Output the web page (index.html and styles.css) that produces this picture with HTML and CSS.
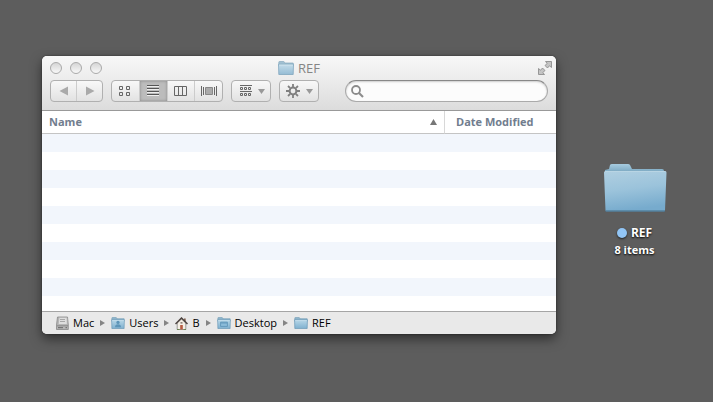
FILE: index.html
```html
<!DOCTYPE html>
<html lang="en">
<head>
    <meta charset="UTF-8">
    <meta name="viewport" content="width=device-width, initial-scale=1.0">
    <title>REF</title>
    <link rel="stylesheet" href="styles.css">
</head>
<body>
    <!-- shared drawings -->
    <svg class="defs" width="0" height="0" aria-hidden="true">
        <defs>
            <linearGradient id="folder-blue" x1="0" y1="0" x2="0" y2="1">
                <stop offset="0" stop-color="#b9d8e8"/>
                <stop offset="1" stop-color="#7fb0cf"/>
            </linearGradient>
            <symbol id="small-folder" viewBox="0 0 16 14">
                <path d="M.8 4V1.2Q.8.5 1.5.5H5.500Q6.200.5 6.400 1.200L6.800 2H15.200V5H.8Z" fill="#8db4ca" stroke="#6f9ab3" stroke-width=".7"/>
                <path d="M.5 3.200H15.500L15.200 13.500H.8Z" fill="url(#folder-blue)" stroke="#6796b4" stroke-width=".8"/>
                <path d="M1.200 4H14.800" stroke="#d3e8f2" stroke-width=".7"/>
            </symbol>
        </defs>
    </svg>

    <main class="desktop">
        <section class="window">
            <header class="titlebar">
                <div class="title-row">
                    <div class="lights">
                        <button class="light" aria-label="Close"></button>
                        <button class="light" aria-label="Minimize"></button>
                        <button class="light" aria-label="Zoom"></button>
                    </div>
                    <h1 class="title">
                        <svg class="title-icon" width="16" height="14"><use href="#small-folder"/></svg>
                        REF
                    </h1>
                    <button class="fullscreen" aria-label="Full screen">
                        <svg width="14" height="14" viewBox="0 0 14 14" fill="#c4c4c4" stroke="#858585" stroke-width=".8">
                            <path d="M7.5.5H13.5V6.5L11.5 4.8L9.5 7L7 4.5L9.2 2.4Z"/>
                            <path d="M6.5 13.5H.5V7.5L2.5 9.2L4.5 7L7 9.5L4.8 11.6Z"/>
                        </svg>
                    </button>
                </div>

                <div class="toolbar">
                    <div class="group nav">
                        <button class="segment" aria-label="Back">
                            <svg width="10" height="10"><path d="M.5 5L9 .5V9.5Z" fill="#aaa"/></svg>
                        </button>
                        <button class="segment" aria-label="Forward">
                            <svg width="10" height="10"><path d="M9.5 5L1 .5V9.5Z" fill="#aaa"/></svg>
                        </button>
                    </div>

                    <div class="group views">
                        <button class="segment" aria-label="Icons">
                            <svg width="12" height="10" fill="none" stroke="#666">
                                <path d="M.5 .5H3.5V3.5H.5ZM7.5 .5H10.5V3.5H7.5ZM.5 6.5H3.5V9.5H.5ZM7.5 6.5H10.5V9.5H7.5Z"/>
                            </svg>
                        </button>
                        <button class="segment active" aria-label="List">
                            <svg width="12" height="12">
                                <path d="M0 1.5H12M0 4.5H12M0 7.5H12M0 10.5H12" stroke="#eee"/>
                                <path d="M0 .5H12M0 3.5H12M0 6.5H12M0 9.5H12" stroke="#555"/>
                            </svg>
                        </button>
                        <button class="segment" aria-label="Columns">
                            <svg width="13" height="10" fill="none" stroke="#666">
                                <path d="M.5 .5H12.5V9.5H.5ZM4.5 0V10M8.5 0V10"/>
                            </svg>
                        </button>
                        <button class="segment" aria-label="Cover Flow">
                            <svg width="16" height="10" fill="none" stroke="#666">
                                <path d="M.5 0V10M2.5 1V9M13.5 1V9M15.5 0V10"/>
                                <path d="M4.5 1.5H11.5V8.5H4.5Z" fill="#aaa" stroke="#888"/>
                            </svg>
                        </button>
                    </div>

                    <button class="group menu" aria-label="Arrange">
                        <svg width="12" height="12" fill="none" stroke="#666">
                            <path d="M0 .5H12M0 6.5H12"/>
                            <path d="M.5 2.5H2.5V4.5H.5ZM4.5 2.5H6.5V4.5H4.5ZM8.5 2.5H10.5V4.5H8.5ZM.5 8.5H2.5V10.5H.5ZM4.5 8.5H6.5V10.5H4.5ZM8.5 8.5H10.5V10.5H8.5Z"/>
                        </svg>
                        <svg width="7" height="5"><path d="M0 0H7L3.5 5Z" fill="#999"/></svg>
                    </button>

                    <button class="group menu action" aria-label="Action">
                        <svg width="14" height="14" viewBox="0 0 14 14" fill="none" stroke="#808080">
                            <circle cx="7" cy="7" r="3.4" stroke-width="2"/>
                            <path d="M7 0V3M7 11V14M0 7H3M11 7H14M2 2L4.2 4.2M9.8 9.8L12 12M12 2L9.8 4.2M4.2 9.8L2 12" stroke-width="1.8"/>
                        </svg>
                        <svg width="7" height="5"><path d="M0 0H7L3.5 5Z" fill="#999"/></svg>
                    </button>

                    <label class="search">
                        <svg width="13" height="13" viewBox="0 0 13 13" fill="none" stroke="#8c8c8c">
                            <circle cx="5" cy="5" r="4" stroke-width="1.8"/>
                            <path d="M8 8L12 12" stroke-width="2.2"/>
                        </svg>
                        <input type="search" aria-label="Search">
                    </label>
                </div>
            </header>

            <table class="files">
                <thead>
                    <tr>
                        <th class="name">
                            <div class="sort">Name
                                <svg width="7" height="6"><path d="M3.500 0L7 6H0Z" fill="#777"/></svg>
                            </div>
                        </th>
                        <th class="date">Date Modified</th>
                    </tr>
                </thead>
                <tbody>
                    <tr><td></td><td></td></tr>
                    <tr><td></td><td></td></tr>
                    <tr><td></td><td></td></tr>
                    <tr><td></td><td></td></tr>
                    <tr><td></td><td></td></tr>
                    <tr><td></td><td></td></tr>
                    <tr><td></td><td></td></tr>
                    <tr><td></td><td></td></tr>
                    <tr><td></td><td></td></tr>
                    <tr class="last"><td></td><td></td></tr>
                </tbody>
            </table>

            <footer class="pathbar">
                <span class="crumb">
                    <svg width="14" height="14" viewBox="0 0 14 14">
                        <path d="M2.5 1H12.5L13.3 9V13.500H1.500V9Z" fill="#b5b5b5" stroke="#888" stroke-width=".8"/>
                        <path d="M4 1.500H12L12.300 8.500H3.200Z" fill="#dedede" stroke="#aaa" stroke-width=".6"/>
                        <path d="M5 3.500H10M5 5.500H10" stroke="#999" stroke-width=".8"/>
                        <path d="M2 9.800H13" stroke="#777" stroke-width=".7"/>
                        <path d="M3 11.700H8M10.500 11.700H12" stroke="#666"/>
                    </svg>
                    Mac
                </span>
                <svg class="arrow" width="5" height="6"><path d="M0 0L5 3L0 6Z" fill="#858585"/></svg>
                <span class="crumb">
                    <svg width="14" height="12" viewBox="0 0 16 14">
                        <use href="#small-folder"/>
                        <circle cx="8" cy="6.4" r="1.9" fill="#5e95b8"/>
                        <path d="M4.5 12Q4.5 8.6 8 8.6T11.5 12Z" fill="#5e95b8"/>
                    </svg>
                    Users
                </span>
                <svg class="arrow" width="5" height="6"><path d="M0 0L5 3L0 6Z" fill="#858585"/></svg>
                <span class="crumb">
                    <svg width="13" height="13" viewBox="0 0 13 13">
                        <path d="M2.2 6V12.5H10.8V6L6.5 2Z" fill="#f5efe5" stroke="#777" stroke-width=".7"/>
                        <path d="M9 1.5H10.7V5H9Z" fill="#80604e"/>
                        <path d="M.5 7L6.5 1L12.5 7" fill="none" stroke="#4d4440" stroke-width="1.5"/>
                        <path d="M5.2 8H7.8V12.5H5.2Z" fill="#b65b40"/>
                        <path d="M5.5 5.2H7.5V6.5H5.5Z" fill="#6d6058"/>
                        <path d="M2 12.5H4.5M8.5 12.5H11" stroke="#6b8754"/>
                    </svg>
                    B
                </span>
                <svg class="arrow" width="5" height="6"><path d="M0 0L5 3L0 6Z" fill="#858585"/></svg>
                <span class="crumb">
                    <svg width="14" height="12" viewBox="0 0 16 14">
                        <use href="#small-folder"/>
                        <path d="M4 6H12V11H4Z" fill="#8bbcd9" stroke="#5e95b8"/>
                        <path d="M4.5 7H11.5" stroke="#5e95b8"/>
                    </svg>
                    Desktop
                </span>
                <svg class="arrow" width="5" height="6"><path d="M0 0L5 3L0 6Z" fill="#858585"/></svg>
                <span class="crumb">
                    <svg width="14" height="12"><use href="#small-folder"/></svg>
                    REF
                </span>
            </footer>
        </section>

        <aside class="shortcut">
            <svg class="big-folder" width="64" height="50" viewBox="0 0 64 50">
                <defs>
                    <linearGradient id="back" x1="0" y1="0" x2="0" y2="1">
                        <stop offset="0" stop-color="#a6cbdf"/>
                        <stop offset="1" stop-color="#6a9ab6"/>
                    </linearGradient>
                    <linearGradient id="front" x1="0" y1="0" x2=".2" y2="1">
                        <stop offset="0" stop-color="#b0cfe1"/>
                        <stop offset=".5" stop-color="#9bc3db"/>
                        <stop offset="1" stop-color="#77abcd"/>
                    </linearGradient>
                </defs>
                <path d="M2 10V7L6 6L7 2Q7.500 1 9 1H25Q26.500 1 27 2L29 6H59Q61 6 61 8V12H2Z" fill="url(#back)"/>
                <path d="M1 9.500Q1 8 2.500 8H62Q63.500 8 63.500 9.500L62 47.500Q62 48.500 61 48.500H3.500Q2.500 48.500 2.500 47.500Z" fill="url(#front)"/>
                <path d="M2 8.500H62.500" stroke="#b9d5e4" stroke-width="1"/>
                <path d="M2.500 48H62" stroke="#426c87" stroke-width="1"/>
            </svg>
            <div class="label"><span class="tag"></span>REF</div>
            <div class="info">8 items</div>
        </aside>
    </main>
</body>
</html>
```
FILE: styles.css
```css
* {
    box-sizing: border-box;
}

body {
    margin: 0;
    min-height: 100vh;
    background-color: #5d5d5d;
    font-family: "Open Sans", sans-serif;
    font-size: 11px;
    line-height: 16px;
    color: #000;
}

button {
    padding: 0;
    margin: 0;
    border: none;
    background: none;
}

svg {
    display: block;
    flex: none;
}

.defs {
    position: absolute;
}

.desktop {
    display: flex;
    align-items: flex-start;
    padding: 56px 0 56px 42px;
}

/* finder window */
.window {
    flex: 1;
    border-radius: 5px;
    overflow: hidden;
    background-color: #fff;
    box-shadow: 0 5px 12px rgba(0, 0, 0, 0.5), 0 0 2px rgba(0, 0, 0, 0.5);
}

.titlebar {
    padding: 0 8px 8px;
    background: linear-gradient(#f8f8f8, #dcdcdc);
    border-bottom: 1px solid #999;
}

.title-row {
    display: grid;
    grid-template-columns: 1fr auto 1fr;
    align-items: center;
    height: 24px;
}

.lights {
    display: flex;
    gap: 8px;
}

.light {
    width: 12px;
    height: 12px;
    border: 1px solid #aaa;
    border-radius: 50%;
    background: linear-gradient(#d5d5d5, #f8f8f8);
}

.title {
    display: flex;
    align-items: center;
    gap: 4px;
    margin: 0;
    font-size: 13px;
    font-weight: normal;
    color: #858585;
}

.title-icon {
    opacity: 0.8;
}

.fullscreen {
    justify-self: end;
    margin-right: -4px;
}

.toolbar {
    display: flex;
    gap: 8px;
}

.group {
    display: flex;
    height: 22px;
    border: 1px solid #b0b0b0;
    border-radius: 4px;
    background: linear-gradient(#f8f8f8, #e2e2e2);
    overflow: hidden;
}

.nav {
    width: 53px;
}

.views {
    width: 112px;
}

.segment {
    display: flex;
    flex: 1;
    align-items: center;
    justify-content: center;
}

.segment + .segment {
    border-left: 1px solid #ccc;
}

.segment.active {
    background-color: #bcbcbc;
    box-shadow: inset 0 0 3px #888;
}

.menu {
    align-items: center;
    justify-content: space-between;
    width: 40px;
    padding: 0 5px 0 8px;
}

.action {
    padding-left: 6px;
}

.search {
    display: flex;
    flex: 1;
    align-items: center;
    gap: 4px;
    height: 22px;
    margin-left: 18px;
    padding: 0 8px 0 5px;
    border: 1px solid #aaa;
    border-top-color: #888;
    border-radius: 11px;
    background-color: #fcfcfc;
    box-shadow: inset 0 1px 2px #ccc;
}

.search input {
    flex: 1;
    min-width: 0;
    padding: 0;
    border: none;
    outline: none;
    background: none;
    font: inherit;
}

/* file list */
.files {
    width: 100%;
    border-collapse: separate;
    border-spacing: 0;
    table-layout: fixed;
}

.files th {
    height: 23px;
    padding: 0 7px;
    border-bottom: 1px solid #c4c4c4;
    font-weight: bold;
    text-align: left;
    color: #717d8e;
}

.files .date {
    width: 112px;
    padding-left: 11px;
    border-left: 1px solid #d8d8d8;
}

.sort {
    display: flex;
    align-items: center;
    justify-content: space-between;
}

.files td {
    height: 18px;
    padding: 0;
}

.files .last td {
    height: 15px;
}

.files tbody tr:nth-child(odd) {
    background-color: #f2f6fc;
}

/* path bar */
.pathbar {
    display: flex;
    align-items: center;
    gap: 6px;
    height: 23px;
    padding: 0 13px;
    border-top: 1px solid #a5a5a5;
    background-color: #e9e9e9;
}

.crumb {
    display: flex;
    align-items: center;
    gap: 4px;
}

/* folder on the desktop */
.shortcut {
    display: flex;
    flex-direction: column;
    align-items: center;
    width: 157px;
    padding-top: 107px;
    font-weight: bold;
    color: #fff;
    text-shadow: 0 1px 2px #000;
}

.big-folder {
    margin-bottom: 12px;
}

.label {
    display: flex;
    align-items: center;
    gap: 4px;
    font-size: 12px;
}

.tag {
    width: 10px;
    height: 10px;
    border-radius: 50%;
    background-color: #92c5f5;
    box-shadow: 0 1px 2px #222;
}

.info {
    line-height: 18px;
}
```
